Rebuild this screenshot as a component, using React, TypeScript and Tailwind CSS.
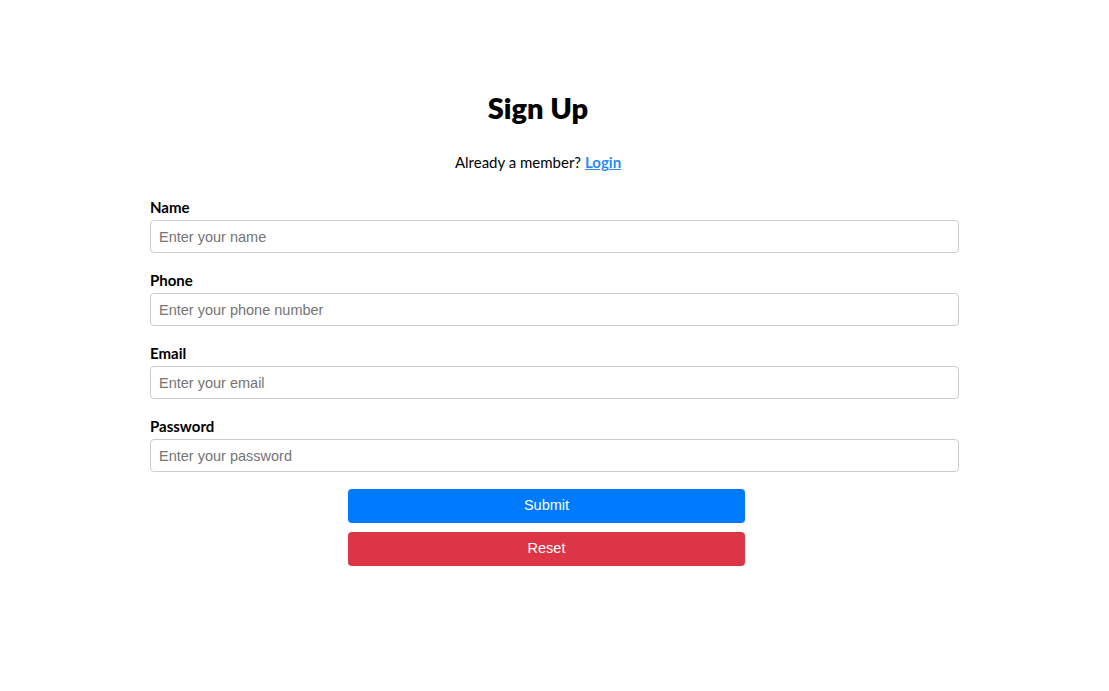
import React from 'react';

const fields = [
  { label: 'Name', placeholder: 'Enter your name', type: 'text' },
  { label: 'Phone', placeholder: 'Enter your phone number', type: 'tel' },
  { label: 'Email', placeholder: 'Enter your email', type: 'email' },
  { label: 'Password', placeholder: 'Enter your password', type: 'password' },
];

export default function App() {
  return (
    <div className="min-h-screen bg-white" style={{ fontFamily: 'Lato, "Noto Sans", sans-serif' }}>
      <div className="w-[809px] ml-[150px] pt-[88px]">
        <div className="pr-[33px] text-center">
          <h1 className="text-[29px] leading-[40px] font-extrabold text-black">Sign Up</h1>
          <p className="mt-[24px] text-[15px] leading-[20px] text-black">
            Already a member?{' '}
            <a href="#" className="font-bold text-[#2b8cf5] underline">Login</a>
          </p>
        </div>
        <form className="mt-[25px] flex flex-col gap-[17px]">
          {fields.map(f => (
            <div key={f.label} className="flex flex-col">
              <label className="text-[15px] leading-[20px] font-bold text-black">{f.label}</label>
              <input
                type={f.type}
                placeholder={f.placeholder}
                className="mt-[3px] h-[33px] w-full rounded-[4px] border border-[#cccccc] px-[8px] text-[14.5px] placeholder:text-[#757575] outline-none"
                style={{ fontFamily: '"Liberation Sans", Arial, sans-serif' }}
              />
            </div>
          ))}
          <div className="ml-[198px] w-[397px] flex flex-col gap-[9px]" style={{ fontFamily: '"Liberation Sans", Arial, sans-serif' }}>
            <button type="button" className="h-[34px] rounded-[4px] bg-[#007bff] text-white text-[14.5px]">Submit</button>
            <button type="reset" className="h-[34px] rounded-[4px] bg-[#dc3545] text-white text-[14.5px]">Reset</button>
          </div>
        </form>
      </div>
    </div>
  );
}
